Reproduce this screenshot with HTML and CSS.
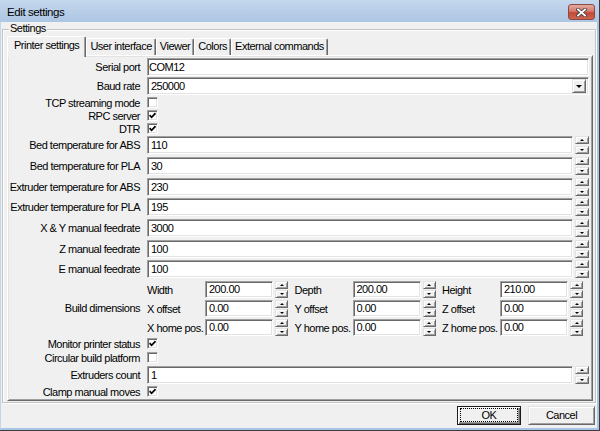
FILE: index.html
```html
<!DOCTYPE html>
<html>
<head>
<meta charset="utf-8">
<title>Edit settings</title>
<link rel="stylesheet" href="styles.css">
</head>
<body>
<div class="window">
  <div class="titlebar">
    <span class="title">Edit settings</span>
    <span class="close">
      <svg width="11" height="9" viewBox="0 0 11 9">
        <path d="M2 1.5 L9 7.5 M9 1.5 L2 7.5" stroke="#4a4040" stroke-width="3.6" stroke-linecap="square"/>
        <path d="M2 1.5 L9 7.5 M9 1.5 L2 7.5" stroke="#fff" stroke-width="1.8" stroke-linecap="square"/>
      </svg>
    </span>
  </div>
  <div class="client">
    <fieldset class="group">
      <legend>Settings</legend>
      <div class="tabs">
        <span class="tab active">Printer settings</span>
        <span class="tab">User interface</span>
        <span class="tab">Viewer</span>
        <span class="tab">Colors</span>
        <span class="tab">External commands</span>
      </div>
      <div class="panel">
        <div class="form">
          <label class="lbl">Serial port</label>
          <input class="field text" value="COM12">

          <label class="lbl">Baud rate</label>
          <div class="field combo"><span class="value">250000</span><span class="drop raised"><i class="arrow-lg"></i></span></div>

          <label class="lbl">TCP streaming mode</label>
          <span class="check"></span>

          <label class="lbl">RPC server</label>
          <span class="check"><svg width="7" height="7" viewBox="0 0 7 7"><polyline points="0.6,3.2 2.6,5.3 6.5,1.2" fill="none" stroke="#000" stroke-width="1.7"/></svg></span>

          <label class="lbl">DTR</label>
          <span class="check"><svg width="7" height="7" viewBox="0 0 7 7"><polyline points="0.6,3.2 2.6,5.3 6.5,1.2" fill="none" stroke="#000" stroke-width="1.7"/></svg></span>

          <label class="lbl">Bed temperature for ABS</label>
          <div class="num"><input class="field" value="110"><span class="spin"><span class="spin-btn raised"><i class="up"></i></span><span class="spin-btn raised"><i class="down"></i></span></span></div>

          <label class="lbl">Bed temperature for PLA</label>
          <div class="num"><input class="field" value="30"><span class="spin"><span class="spin-btn raised"><i class="up"></i></span><span class="spin-btn raised"><i class="down"></i></span></span></div>

          <label class="lbl">Extruder temperature for ABS</label>
          <div class="num"><input class="field" value="230"><span class="spin"><span class="spin-btn raised"><i class="up"></i></span><span class="spin-btn raised"><i class="down"></i></span></span></div>

          <label class="lbl">Extruder temperature for PLA</label>
          <div class="num"><input class="field" value="195"><span class="spin"><span class="spin-btn raised"><i class="up"></i></span><span class="spin-btn raised"><i class="down"></i></span></span></div>

          <label class="lbl">X &amp; Y manual feedrate</label>
          <div class="num"><input class="field" value="3000"><span class="spin"><span class="spin-btn raised"><i class="up"></i></span><span class="spin-btn raised"><i class="down"></i></span></span></div>

          <label class="lbl">Z manual feedrate</label>
          <div class="num"><input class="field" value="100"><span class="spin"><span class="spin-btn raised"><i class="up"></i></span><span class="spin-btn raised"><i class="down"></i></span></span></div>

          <label class="lbl">E manual feedrate</label>
          <div class="num"><input class="field" value="100"><span class="spin"><span class="spin-btn raised"><i class="up"></i></span><span class="spin-btn raised"><i class="down"></i></span></span></div>

          <label class="lbl tall">Build dimensions</label>
          <div class="build">
            <span class="dim">Width</span>
            <input class="field" value="200.00">
            <span class="spin"><span class="spin-btn raised"><i class="up"></i></span><span class="spin-btn raised"><i class="down"></i></span></span>
            <span class="dim ind">Depth</span>
            <input class="field" value="200.00">
            <span class="spin"><span class="spin-btn raised"><i class="up"></i></span><span class="spin-btn raised"><i class="down"></i></span></span>
            <span class="dim ind">Height</span>
            <input class="field" value="210.00">
            <span class="spin"><span class="spin-btn raised"><i class="up"></i></span><span class="spin-btn raised"><i class="down"></i></span></span>

            <span class="dim">X offset</span>
            <input class="field" value="0.00">
            <span class="spin"><span class="spin-btn raised"><i class="up"></i></span><span class="spin-btn raised"><i class="down"></i></span></span>
            <span class="dim ind">Y offset</span>
            <input class="field" value="0.00">
            <span class="spin"><span class="spin-btn raised"><i class="up"></i></span><span class="spin-btn raised"><i class="down"></i></span></span>
            <span class="dim ind">Z offset</span>
            <input class="field" value="0.00">
            <span class="spin"><span class="spin-btn raised"><i class="up"></i></span><span class="spin-btn raised"><i class="down"></i></span></span>

            <span class="dim">X home pos.</span>
            <input class="field" value="0.00">
            <span class="spin"><span class="spin-btn raised"><i class="up"></i></span><span class="spin-btn raised"><i class="down"></i></span></span>
            <span class="dim ind">Y home pos.</span>
            <input class="field" value="0.00">
            <span class="spin"><span class="spin-btn raised"><i class="up"></i></span><span class="spin-btn raised"><i class="down"></i></span></span>
            <span class="dim ind">Z home pos.</span>
            <input class="field" value="0.00">
            <span class="spin"><span class="spin-btn raised"><i class="up"></i></span><span class="spin-btn raised"><i class="down"></i></span></span>
          </div>

          <label class="lbl">Monitor printer status</label>
          <span class="check"><svg width="7" height="7" viewBox="0 0 7 7"><polyline points="0.6,3.2 2.6,5.3 6.5,1.2" fill="none" stroke="#000" stroke-width="1.7"/></svg></span>

          <label class="lbl">Circular build platform</label>
          <span class="check"></span>

          <label class="lbl">Extruders count</label>
          <div class="num"><input class="field" value="1"><span class="spin"><span class="spin-btn raised"><i class="up"></i></span><span class="spin-btn raised"><i class="down"></i></span></span></div>

          <label class="lbl">Clamp manual moves</label>
          <span class="check"><svg width="7" height="7" viewBox="0 0 7 7"><polyline points="0.6,3.2 2.6,5.3 6.5,1.2" fill="none" stroke="#000" stroke-width="1.7"/></svg></span>
        </div>
      </div>
    </fieldset>
    <div class="actions">
      <button class="btn default"><span class="focus">OK</span></button>
      <button class="btn raised cancel">Cancel</button>
    </div>
  </div>
</div>
</body>
</html>
```
FILE: styles.css
```css
* { box-sizing: border-box; }
html, body { margin: 0; padding: 0; }
body {
  width: 600px;
  height: 431px;
  overflow: hidden;
  font-family: "Liberation Sans", Arial, sans-serif;
  font-size: 11px;
  letter-spacing: -0.5px;
  color: #000;
  background: #f0f0f0;
}

.window {
  width: 600px;
  height: 431px;
  display: flex;
  flex-direction: column;
  border-right: 1px solid #3d3d3d;
  border-bottom: 1px solid #3d3d3d;
}

.titlebar {
  flex: none;
  height: 22px;
  display: flex;
  align-items: center;
  justify-content: space-between;
  padding: 0 4px 0 7px;
  background: linear-gradient(#c4d7ed, #adc6e3);
}
.title { font-size: 11.5px; letter-spacing: -0.4px; padding-top: 2px; }
.close {
  width: 27px;
  height: 16px;
  margin-top: 2px;
  display: flex;
  align-items: center;
  justify-content: center;
  border: 1px solid #8a4a44;
  border-radius: 3px;
  background: linear-gradient(#e3aaa0, #d47a6c 45%, #c24a36 55%, #cd6550);
}

.client {
  flex: 1;
  display: flex;
  flex-direction: column;
  background: #f0f0f0;
  border-left: 1px solid #c4d6ec;
  border-right: 2px solid #a9c5e6;
  border-bottom: 2px solid #a9c5e6;
}

.group {
  margin: 0 1px;
  padding: 0 2px 1px 4px;
  min-width: 0;
  border: 1px solid #c3c3c3;
  box-shadow: inset 1px 1px #fff, 1px 1px #fff;
}
.group legend {
  margin-left: 2px;
  padding: 0 1px 2px;
  line-height: 13px;
  background: #f0f0f0;
}

.tabs {
  position: relative;
  z-index: 1;
  display: flex;
  align-items: flex-end;
  height: 19px;
  margin-top: -1px;
  padding-left: 2px;
}
.tab {
  height: 17px;
  padding: 0 3px;
  line-height: 15px;
  white-space: nowrap;
  background: #f0f0f0;
  border: 1px solid #fff;
  border-right-color: #696969;
  border-bottom: 0;
  border-radius: 2px 2px 0 0;
  box-shadow: inset -1px 0 #a0a0a0;
}
.tab.active {
  height: 21px;
  margin: 0 0 -2px -2px;
  padding: 0 6px;
  line-height: 17px;
}

.panel {
  border: 1px solid;
  border-color: #fff #696969 #696969 #fff;
  box-shadow: inset 1px 1px #e3e3e3, inset -1px -1px #a0a0a0;
  padding: 1px 3px 1px 1px;
  background: #f0f0f0;
}

.form {
  display: grid;
  grid-template-columns: 131px 442px;
  column-gap: 7px;
  grid-template-rows: 19px 20px 13px 13px 13px repeat(7, 20.7px) 19px 19px 19px 14px 14px 20px 14px;
  align-items: center;
}
.lbl { text-align: right; white-space: nowrap; line-height: 13px; padding-top: 1px; }
.lbl.tall { grid-row: span 3; }

.field {
  display: block;
  width: 100%;
  height: 18px;
  margin: 0;
  padding: 0 3px;
  border: 1px solid;
  border-color: #a0a0a0 #fff #fff #a0a0a0;
  box-shadow: inset 1px 1px #696969, inset -1px -1px #e3e3e3;
  background: #fff;
  font: inherit;
  letter-spacing: inherit;
  color: #000;
  outline: none;
}
.field.text { padding-left: 1px; }

.raised {
  border: 1px solid;
  border-color: #e3e3e3 #696969 #696969 #e3e3e3;
  box-shadow: inset 1px 1px #fff, inset -1px -1px #a0a0a0;
  background: #f0f0f0;
}

.combo { display: flex; align-items: center; padding: 0 2px 0 3px; }
.combo .value { flex: 1; }
.drop {
  width: 14px;
  height: 14px;
  display: flex;
  align-items: center;
  justify-content: center;
}
.arrow-lg {
  width: 0; height: 0;
  border-left: 3px solid transparent;
  border-right: 3px solid transparent;
  border-top: 3px solid #000;
}

.num { display: flex; align-items: center; gap: 2px; }
.num .field { flex: 1; width: auto; min-width: 0; }
.spin {
  flex: none;
  width: 14px;
  height: 18px;
  display: flex;
  flex-direction: column;
  justify-content: space-between;
}
.spin-btn {
  height: 8px;
  display: flex;
  align-items: center;
  justify-content: center;
}
.up {
  width: 0; height: 0;
  border-left: 2px solid transparent;
  border-right: 2px solid transparent;
  border-bottom: 2px solid #000;
}
.down {
  width: 0; height: 0;
  border-left: 2px solid transparent;
  border-right: 2px solid transparent;
  border-top: 2px solid #000;
}

.build {
  grid-row: span 3;
  align-self: stretch;
  display: grid;
  grid-template-columns: 58px 68px 15px 64.5px 68px 15px 64.5px 68px 15px;
  grid-template-rows: repeat(3, 19px);
  align-items: center;
}
.build .field { height: 17px; }
.build .spin { width: 13px; height: 17px; margin-left: 2px; }
.dim { white-space: nowrap; padding-top: 1px; }
.dim.ind { padding-left: 6.5px; }

.check {
  justify-self: start;
  width: 11px;
  height: 11px;
  display: flex;
  align-items: center;
  justify-content: center;
  border: 1px solid;
  border-color: #a0a0a0 #fff #fff #a0a0a0;
  box-shadow: inset 1px 1px #696969, inset -1px -1px #e3e3e3;
  background: #fff;
}
.check svg { display: block; }

.actions {
  display: flex;
  justify-content: flex-end;
  gap: 7px;
  margin: 3px 2px 0 0;
}
.btn {
  height: 19px;
  padding: 0;
  font: inherit;
  letter-spacing: inherit;
  color: #000;
  background: #f0f0f0;
}
.btn.default {
  width: 64px;
  border: 1px solid #1a1a1a;
  box-shadow: inset 1px 1px #fff, inset -1px -1px #696969, inset -2px -2px #a0a0a0;
}
.focus {
  display: flex;
  align-items: center;
  justify-content: center;
  height: 14px;
  margin: 0 2px;
  border: 1px dotted #000;
  line-height: 12px;
}
.btn.cancel { width: 67px; }
```
